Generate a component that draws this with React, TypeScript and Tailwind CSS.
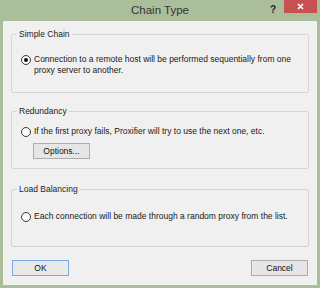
import type { ReactNode } from 'react';

function Radio({ checked }: { checked?: boolean }) {
  return (
    <span className="mt-[1px] flex h-[10px] w-[10px] shrink-0 items-center justify-center rounded-full border border-[#3a3a3a] bg-gradient-to-b from-[#f4f4f4] to-[#ffffff]">
      {checked && <span className="h-[4px] w-[4px] rounded-full bg-[#111]" />}
    </span>
  );
}

function Group({
  title,
  className,
  children,
}: {
  title: string;
  className: string;
  children: ReactNode;
}) {
  return (
    <fieldset className={`rounded-[2px] border border-[#d5d5d5] ${className}`}>
      <legend className="ml-[5px] px-[2px] leading-[10px] text-[#222]">{title}</legend>
      {children}
    </fieldset>
  );
}

function Button({ label, focused }: { label: string; focused?: boolean }) {
  return (
    <button
      className={`h-[16px] w-[57px] border text-[8.5px] leading-none text-[#111] ${
        focused ? 'border-[#7aa7e6] bg-[#e9e9e9]' : 'border-[#adadad] bg-[#e6e6e6]'
      }`}
    >
      {label}
    </button>
  );
}

export default function App() {
  return (
    <div className="flex h-[288px] w-[320px] flex-col bg-[#abbe9c] font-['Liberation_Sans',sans-serif] text-[8.5px] text-[#1a1a1a]">
      {/* Title bar */}
      <div className="relative flex h-[21px] items-center justify-center">
        <span className="text-[11.5px] text-[#333]">Chain Type</span>
        <span className="absolute right-[44px] top-[2px] text-[10px] font-bold text-[#222]">?</span>
        <span className="absolute right-[3px] top-0 flex h-[13px] w-[33px] items-center justify-center bg-[#c75050]">
          <svg width="7" height="7" viewBox="0 0 7 7">
            <path d="M1 1 L6 6 M6 1 L1 6" stroke="white" strokeWidth="1.6" />
          </svg>
        </span>
      </div>

      {/* Body */}
      <div className="mx-[3px] mb-[3px] flex flex-1 flex-col bg-[#f0f0f0] px-[8px] pt-[8px]">
        <Group title="Simple Chain" className="h-[64px]">
          <div className="flex gap-[3px] pl-[9px] pt-[15px]">
            <Radio checked />
            <p className="leading-[11px]">
              Connection to a remote host will be performed sequentially from one
              <br />
              proxy server to another.
            </p>
          </div>
        </Group>

        <Group title="Redundancy" className="mt-[13px] h-[63px]">
          <div className="flex gap-[3px] pl-[9px] pt-[10px]">
            <Radio />
            <p className="leading-[11px]">If the first proxy fails, Proxifier will try to use the next one, etc.</p>
          </div>
          <div className="pl-[21px] pt-[6px]">
            <Button label="Options..." />
          </div>
        </Group>

        <Group title="Load Balancing" className="mt-[15px] h-[63px]">
          <div className="flex gap-[3px] pl-[9px] pt-[17px]">
            <Radio />
            <p className="leading-[11px]">Each connection will be made through a random proxy from the list.</p>
          </div>
        </Group>

        <div className="mt-[13px] flex justify-between px-[1px]">
          <Button label="OK" focused />
          <Button label="Cancel" />
        </div>
      </div>
    </div>
  );
}
